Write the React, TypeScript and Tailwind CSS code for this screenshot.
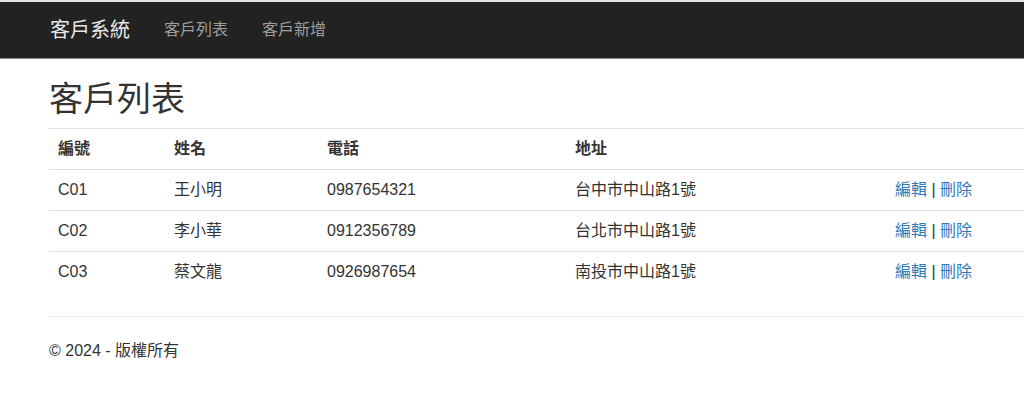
const customers = [
  { id: "C01", name: "王小明", phone: "0987654321", address: "台中市中山路1號" },
  { id: "C02", name: "李小華", phone: "0912356789", address: "台北市中山路1號" },
  { id: "C03", name: "蔡文龍", phone: "0926987654", address: "南投市中山路1號" },
];

const font = "font-['Liberation_Sans','Noto_Sans_CJK_TC',sans-serif]";

export default function App() {
  return (
    <div className={`h-[396px] w-[1024px] overflow-hidden bg-white text-[#333] ${font}`}>
      <div className="h-[2px] bg-[#e3e3e3]" />
      <nav className="flex h-[57px] items-center border-b border-[#8a8a8a] bg-[#222] pl-[50px]">
        <a href="#" className="text-[20px] leading-none text-[#e8e8e8]">客戶系統</a>
        <a href="#" className="ml-[34px] text-[16px] leading-none text-[#9d9d9d]">客戶列表</a>
        <a href="#" className="ml-[34px] text-[16px] leading-none text-[#9d9d9d]">客戶新增</a>
      </nav>

      <main className="pl-[49px]">
        <h2 className="mt-[20px] h-[40px] text-[34px] leading-[40px] font-normal">客戶列表</h2>

        <table className="mt-[9px] w-[1100px] border-t border-[#ddd] text-[16px] leading-[24px]">
          <thead>
            <tr className="h-[41px] text-left">
              <th className="w-[116px] pl-[9px] font-bold">編號</th>
              <th className="w-[153px] pl-[9px] font-bold">姓名</th>
              <th className="w-[248px] pl-[9px] font-bold">電話</th>
              <th className="w-[320px] pl-[9px] font-bold">地址</th>
              <th />
            </tr>
          </thead>
          <tbody>
            {customers.map((c) => (
              <tr key={c.id} className="h-[41px] border-t border-[#ddd]">
                <td className="pl-[9px]">{c.id}</td>
                <td className="pl-[9px]">{c.name}</td>
                <td className="pl-[9px]">{c.phone}</td>
                <td className="pl-[9px]">{c.address}</td>
                <td className="pl-[9px]">
                  <a href="#" className="text-[#337ab7]">編輯</a> | <a href="#" className="text-[#337ab7]">刪除</a>
                </td>
              </tr>
            ))}
          </tbody>
        </table>

        <hr className="mt-[23px] border-[#eee]" />
        <footer className="mt-[22px] text-[16px] leading-[24px]">© 2024 - 版權所有</footer>
      </main>
    </div>
  );
}
